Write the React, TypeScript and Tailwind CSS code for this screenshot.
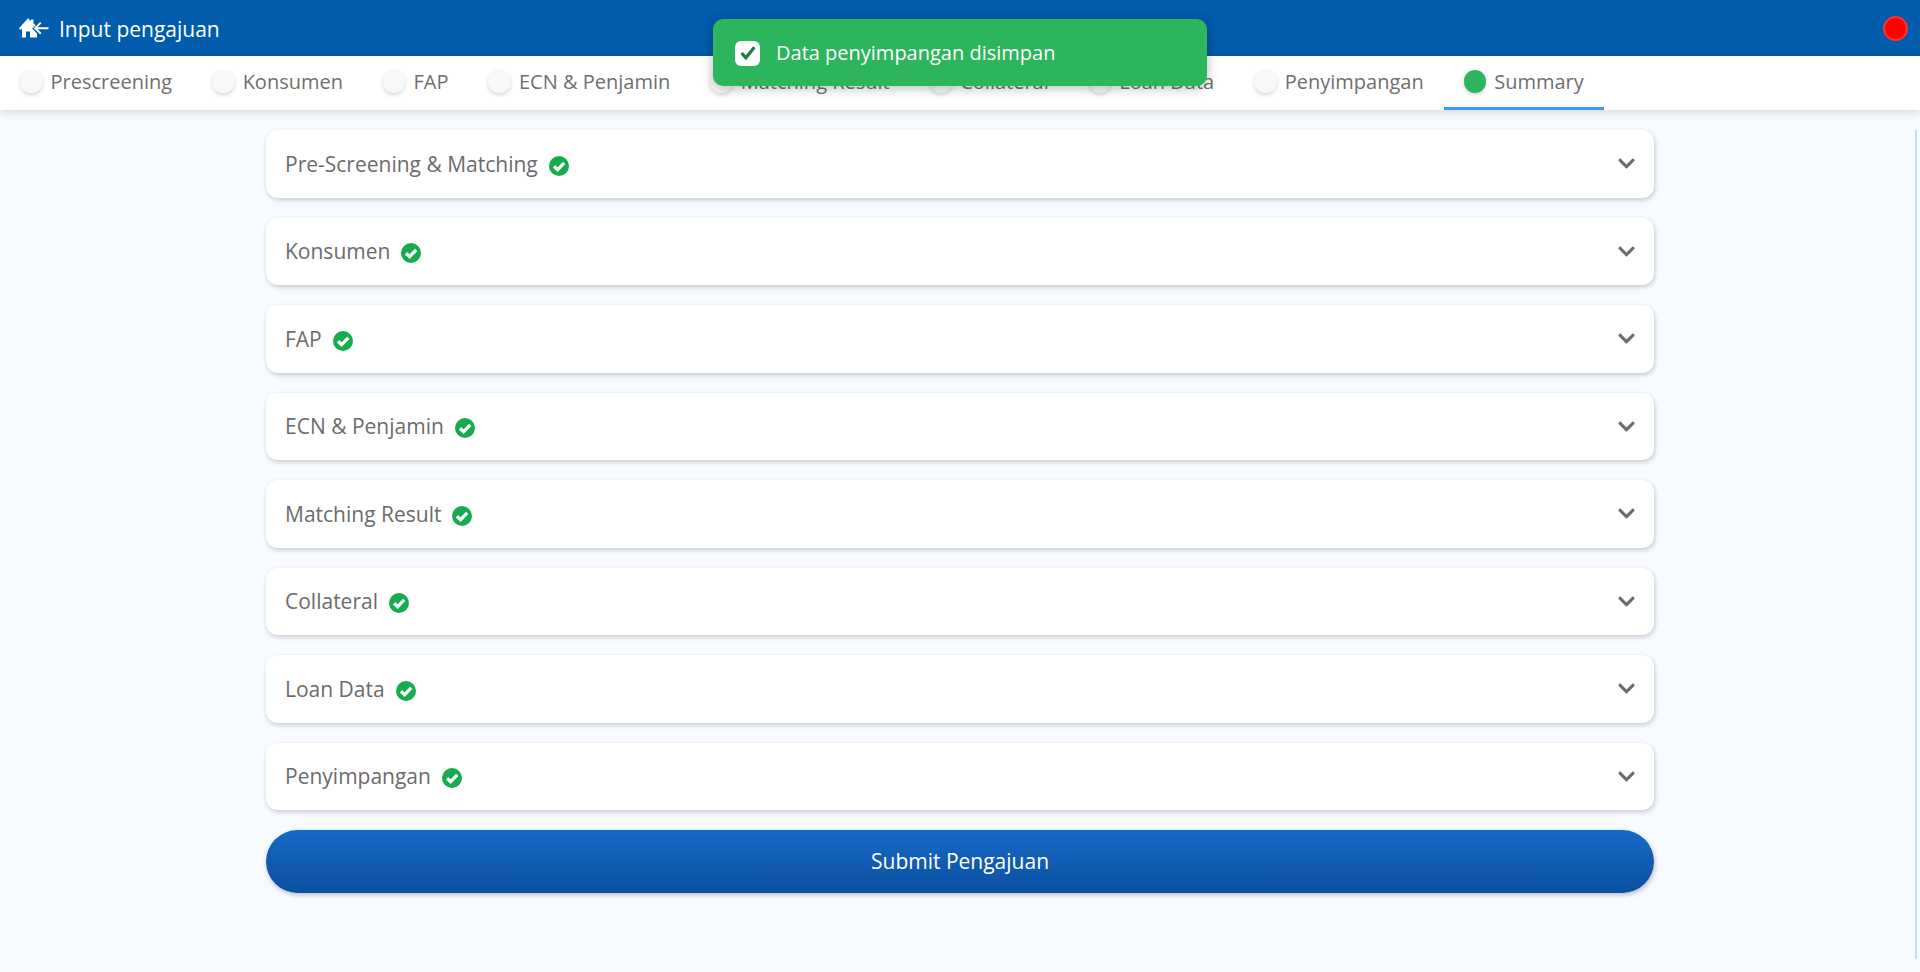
import { FaChevronDown } from "react-icons/fa";

const tabs = ["Prescreening", "Konsumen", "FAP", "ECN & Penjamin", "Matching Result", "Collateral", "Loan Data", "Penyimpangan"];
const cards = ["Pre-Screening & Matching", "Konsumen", "FAP", "ECN & Penjamin", "Matching Result", "Collateral", "Loan Data", "Penyimpangan"];

function Check() {
  return (
    <svg width="20" height="20" viewBox="0 0 20 20" fill="none" className="mt-[4px] shrink-0">
      <circle cx="10" cy="10" r="10" fill="#16ab4e" />
      <path d="M5 10.2 L8.6 13.6 L15.2 6.8" stroke="#fff" strokeWidth="3.3" />
    </svg>
  );
}

export default function App() {
  return (
    <div className="relative h-[972px] overflow-hidden bg-[#f7faff] font-['Open_Sans',sans-serif]">
      <header className="flex h-[56px] items-center justify-between bg-[#015cab] pl-[19px] pr-[12px]">
        <div className="flex items-center gap-[10px] text-white">
          <svg width="30" height="20" viewBox="0 0 30 20" fill="none">
            <path d="M9 0.3 L12 3 V1.5 H14.5 V5.3 L16.8 7.6 L13.2 10.5 L18 15.6 V19.6 H11 V13.5 H7 V19.6 H3 V10.8 L1.3 12 L0 10.2 Z" fill="#fff" />
            <path d="M29.5 10.2 H16.5 M21.8 4.6 L16.2 10.2 L21.8 15.8" stroke="#fff" strokeWidth="2" />
          </svg>
          <span className="pt-[2px] text-[21px] leading-none font-medium">Input pengajuan</span>
        </div>
        <div className="h-[25px] w-[25px] rounded-full border-2 border-[#ff3030] bg-[#ff0000]" />
      </header>

      <nav className="relative z-10 flex h-[54px] items-stretch bg-white shadow-[0_2px_8px_rgba(0,0,0,0.14)]">
        {tabs.map((t) => (
          <div key={t} className="flex items-center px-[20px] pb-[3px] text-[20px] text-[#6f6f6f]">
            <span className="mr-[8px] h-[23px] w-[22.5px] rounded-full bg-[#f8f8f8] shadow-[0_2px_4px_rgba(0,0,0,0.16)]" />
            {t}
          </div>
        ))}
        <div className="flex items-center border-b-[3px] border-[#3b96ff] px-[20px] text-[20px] text-[#6f6f6f]">
          <span className="mr-[8px] h-[23px] w-[22.5px] rounded-full bg-[#2db55d] shadow-[0_2px_4px_rgba(0,0,0,0.16)]" />
          Summary
        </div>
      </nav>

      <main className="mx-auto flex w-[1388px] flex-col gap-[20px] pt-[20px]">
        {cards.map((c) => (
          <div key={c} className="flex h-[67.5px] items-center justify-between rounded-[12px] bg-white pl-[19px] pr-[18px] shadow-[1px_2px_5px_rgba(0,0,0,0.2)]">
            <div className="flex items-center gap-[11px] text-[21px] text-[#6b6b6b]">
              <span className="pt-[1px]">{c}</span>
              <Check />
            </div>
            <FaChevronDown className="text-[19px] text-[#6b6b6b]" />
          </div>
        ))}
        <button className="h-[63px] rounded-full bg-gradient-to-b from-[#1669c7] to-[#0b50a0] pt-[1px] text-[21px] font-medium text-white shadow-[1px_2px_5px_rgba(0,0,0,0.25)]">
          Submit Pengajuan
        </button>
      </main>

      <div className="absolute left-[1915px] top-[130px] h-[829px] w-[2px] bg-[#c4dcf8]" />

      <div className="absolute left-[713px] top-[19px] z-20 flex h-[67px] w-[494px] items-center rounded-[10px] bg-[#2db55d] pl-[22px] shadow-[0_2px_12px_rgba(0,0,0,0.28)]">
        <span className="mr-[16px] mt-[1px] flex h-[25px] w-[25px] items-center justify-center rounded-[6px] bg-white">
          <svg width="16" height="14" viewBox="0 0 15 13" fill="none">
            <path d="M1.5 6.5 L5.5 11 L13.5 1.2" stroke="#1f7a45" strokeWidth="3" />
          </svg>
        </span>
        <span className="text-[20px] text-white">Data penyimpangan disimpan</span>
      </div>
    </div>
  );
}
